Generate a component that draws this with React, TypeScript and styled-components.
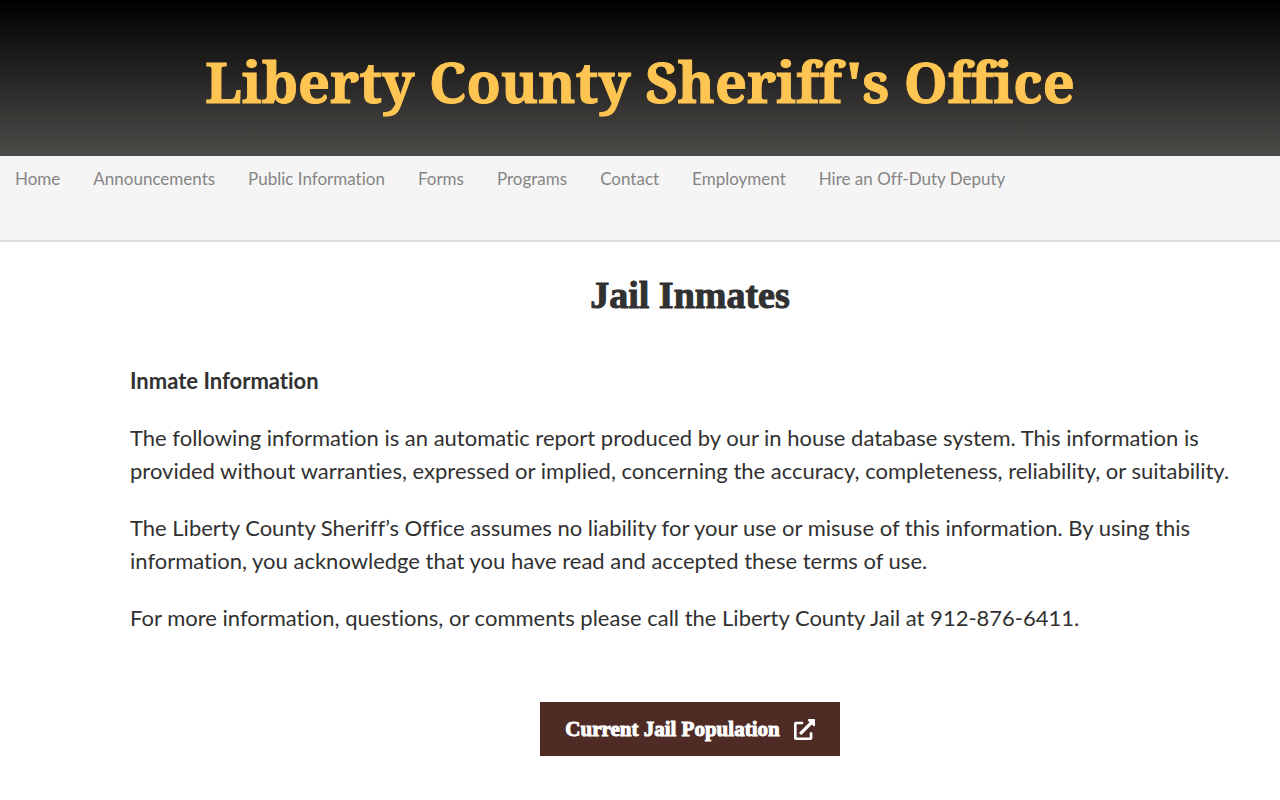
import React from "react";
import styled, { createGlobalStyle } from "styled-components";
import { FaExternalLinkAlt } from "react-icons/fa";

const displayFont = '"Liberation Serif", serif';

const GlobalStyle = createGlobalStyle`
  * { box-sizing: border-box; }
  body {
    margin: 0;
    background: #fff;
    color: #313131;
    font-family: "Lato", "Noto Sans", sans-serif;
    font-variant-ligatures: none;
  }
`;

const Header = styled.header`
  padding: 41px 16px 35px;
  background: linear-gradient(#000, #4d4b48);
`;

const SiteTitle = styled.h1`
  margin: 0;
  color: #ffc553;
  font-family: "Noto Serif", "DejaVu Serif", serif;
  font-size: 56px;
  font-weight: bold;
  line-height: 80px;
  text-align: center;
  -webkit-text-stroke: 1px currentColor;
`;

const Nav = styled.nav`
  min-height: 86px;
  background: #f5f5f5;
  border-bottom: 2px solid #ddd;
`;

const NavList = styled.ul`
  display: flex;
  flex-wrap: wrap;
  column-gap: 33px;
  margin: 0;
  padding: 0 15px;
  list-style: none;
`;

const NavLink = styled.a`
  display: block;
  padding: 11px 0;
  color: #858585;
  font-size: 17px;
  line-height: 24px;
  text-decoration: none;
`;

const Main = styled.main`
  padding: 27px 30px 44px 130px;
`;

const PageTitle = styled.h2`
  margin: 0 0 43px;
  font-family: ${displayFont};
  font-size: 38px;
  font-weight: bold;
  line-height: 52px;
  text-align: center;
  -webkit-text-stroke: 1px currentColor;
`;

const Paragraph = styled.p`
  margin: 0 0 24px;
  font-size: 22px;
  line-height: 33px;
`;

const Actions = styled.div`
  display: flex;
  justify-content: center;
  padding-top: 44px;
`;

const ActionLink = styled.a`
  display: flex;
  align-items: center;
  gap: 14px;
  padding: 12px 25px;
  background: #4e2c25;
  color: #fff;
  font-family: ${displayFont};
  font-size: 21px;
  font-weight: bold;
  line-height: 30px;
  text-decoration: none;
`;

const ActionLabel = styled.span`
  -webkit-text-stroke: 1px currentColor;
`;

const links = ["Home", "Announcements", "Public Information", "Forms", "Programs", "Contact", "Employment", "Hire an Off-Duty Deputy"];

export default function App() {
  return (
    <>
      <GlobalStyle />
      <Header><SiteTitle>Liberty County Sheriff's Office</SiteTitle></Header>
      <Nav>
        <NavList>
          {links.map((label) => <li key={label}><NavLink href="#">{label}</NavLink></li>)}
        </NavList>
      </Nav>
      <Main>
        <PageTitle>Jail Inmates</PageTitle>
        <Paragraph><strong>Inmate Information</strong></Paragraph>
        <Paragraph>The following information is an automatic report produced by our in house database system. This information is provided without warranties, expressed or implied, concerning the accuracy, completeness, reliability, or suitability.</Paragraph>
        <Paragraph>The Liberty County Sheriff’s Office assumes no liability for your use or misuse of this information. By using this information, you acknowledge that you have read and accepted these terms of use.</Paragraph>
        <Paragraph>For more information, questions, or comments please call the Liberty County Jail at 912-876-6411.</Paragraph>
        <Actions>
          <ActionLink href="#">
            <ActionLabel>Current Jail Population</ActionLabel>
            <FaExternalLinkAlt size={21} aria-hidden="true" />
          </ActionLink>
        </Actions>
      </Main>
    </>
  );
}
